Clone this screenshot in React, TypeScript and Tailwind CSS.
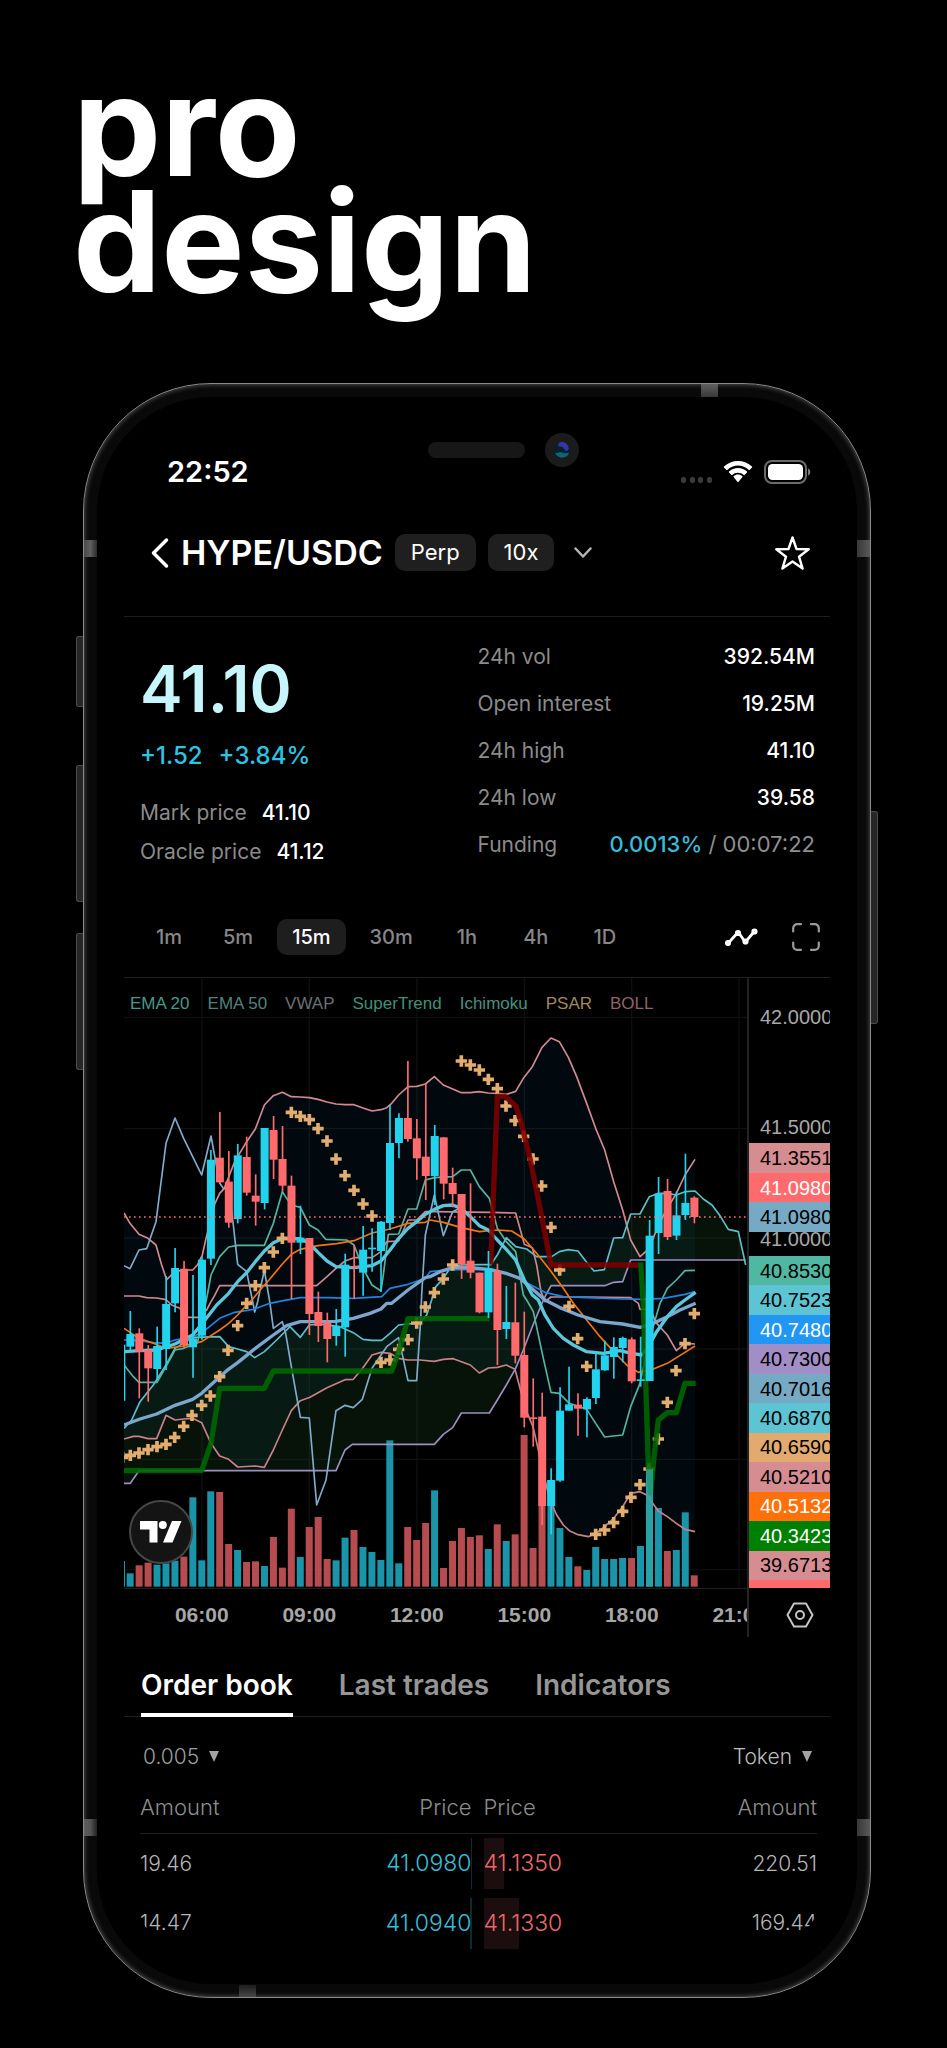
import React from "react";

type Quad = "tl" | "tr" | "bl" | "br";
type Piece = [Quad, string];

// the traces are stored per quadrant of the pane, each with its own origin
const origin: Record<Quad, [number, number]> = {
  tl: [-12, -9],
  tr: [918, -9],
  bl: [-12, 966],
  br: [918, 966],
};

function toPoints(pieces: Piece[]): [number, number][] {
  return pieces.flatMap(([quad, text]) =>
    text.split(" ").map((pair) => {
      const [x, y] = pair.split(",").map(Number);
      return [x + origin[quad][0], y + origin[quad][1]] as [number, number];
    })
  );
}

const toLine = (pieces: Piece[]) =>
  toPoints(pieces)
    .map((p) => p.join(","))
    .join(" ");

const bollUpper: Piece[] = [
  ["tl", "12,714 30,745 57,778 84,790 108,810 125,870 140,914 165,890 191,885 218,885 232,870 247,840 258,790 273,730 285,685 299,655 313,640 340,570 353,545 380,500 406,462 433,390 460,362 487,352 514,365 541,366 568,368 594,373 621,381 648,387 675,389 702,389 729,399 756,408 783,404 800,398 815,385 836,360 864,335 890,334 916,327 943,305"],
  ["tr", "40,330 68,342 94,353 121,353 148,350 175,354 202,355 229,358 257,349 280,310 307,275 336,217 363,189 388,200 415,247 440,305 470,385 497,460 524,525 551,620 578,705 602,795 630,845 658,820 685,750 712,700 739,655 765,600 795,553"],
];

const bollLower: Piece[] = [
  ["bl", "12,417 40,409 57,409 84,416 110,416 138,346 165,360 191,357 218,355 245,368 273,430 299,468 326,478 353,501 406,498 433,502 460,450 487,390 514,332 541,302 570,292 621,263 675,239 700,238 729,203 756,165 783,157 810,160 836,175 864,180 900,180 943,184"],
  ["br", "40,178 70,176 94,185 121,195 148,219 175,204 202,202 229,195 255,208 270,265 290,335 309,380 325,450 340,520 360,600 380,645 400,675 418,692 444,704 475,710 497,700 524,680 551,655 578,620 602,580 630,575 650,585 685,633 712,650 739,670 765,688 795,695"],
];

const kijun: Piece[] = [
  ["tl", "12,963 57,963 80,968 110,969 138,974 155,990"],
  ["bl", "180,25 191,45 205,52 235,52 260,30 273,5"],
  ["tl", "282,965 299,932 460,932 590,932 621,905 648,880 675,858 702,848 756,848 783,830 800,800 836,798 864,735 890,735 916,710 943,710"],
  ["tr", "182,712 257,714 283,808 307,818 320,870 333,950 345,980 363,966 470,966 602,968 625,985"],
  ["br", "630,28 660,28 680,70 712,105 739,152 765,130 795,132"],
];

const tenkan: Piece[] = [
  ["bl", "12,195 40,230 57,247 111,247 138,200 165,150 191,145 232,130 255,20"],
  ["tl", "262,960 273,900 299,845 326,816 353,811 433,811 460,745 487,650 500,670 514,690 541,697 568,750 594,765 617,793 680,795 702,810 729,880 756,930 783,948 790,900 805,778 836,777 864,702 890,702 916,615 943,608"],
  ["tr", "68,605 94,585 121,585 148,635 178,670 202,760 229,800 257,830 280,960"],
  ["br", "290,0 310,35 340,175 363,277 388,280 418,310 470,328 497,370 524,411 578,405 602,320 630,250 658,120 690,10"],
  ["tr", "712,940 739,915 765,887 795,886"],
];

const leadA: Piece[] = [
  ["bl", "12,385 35,360 60,305 100,255 138,195 165,145 218,112 299,110 326,140 353,147 380,155 404,173 433,155 470,120 510,80 541,112 568,75 600,72 660,80 700,98 729,118 756,121 785,121 810,100 836,75 864,72 900,68 920,45 935,0"],
  ["tr", "13,940 40,910 60,880 90,870 148,869 182,869 202,840 229,788 257,815 290,822 320,845 365,845 388,830 415,824 444,828 470,862 492,888 523,884 551,789 578,788 602,717 630,717 658,665 685,655 712,655 739,660 765,650 795,648 820,672 846,690 870,722 895,763 925,770 947,870"],
];

const leadB: Piece[] = [
  ["bl", "12,550 31,550 57,512 648,512 675,450 697,433 943,433"],
  ["br", "13,433 40,403 68,383 94,339 178,339 202,300 229,255 257,205 280,150 309,75 336,10"],
  ["tr", "345,965 363,932 524,932 551,922 578,920 602,855 947,855"],
];

const chikou: Piece[] = [
  ["tl", "12,872 30,881 57,825 80,821 108,740 138,505 165,429 191,490 218,545 245,600 273,483 299,625 310,640 326,640 340,750 353,868 380,890 400,990"],
  ["bl", "404,36 413,5"],
  ["tl", "433,885 450,985"],
  ["bl", "460,85 487,65 497,100 514,200 541,352 568,354 590,615 618,540 648,332 675,316 700,323 727,298 756,205 800,140 836,113 864,242 890,242 902,60"],
  ["tl", "905,960 916,780 943,660"],
  ["tr", "13,660 40,782 68,710 94,697"],
];

const ema20: Piece[] = [
  ["bl", "12,155 60,152 110,150 165,132 218,105 255,60 290,15"],
  ["tl", "326,955 353,920 380,893 406,860 433,828 460,803 487,791 541,791 568,805 594,832 621,858 648,875 700,878 756,872 783,858 810,825 836,790 864,760 890,740 916,718 943,703"],
  ["tr", "40,692 68,690 94,700 121,725 148,752 175,765 202,795 229,823 257,855 283,915 307,960"],
  ["br", "325,0 345,45 370,85 400,115 430,135 470,155 520,160 570,152 605,160 635,165 655,140 680,95 712,50 739,20 765,0"],
  ["tr", "797,952"],
];

const ema50: Piece[] = [
  ["bl", "12,375 60,357 110,342 165,316 218,298 245,280 273,254 320,212 353,188 406,145 460,105 500,77 541,65 594,65 648,64 700,55 750,40 783,27 800,10"],
  ["tl", "815,985 864,945 916,908"],
  ["tr", "0,905 30,890 68,878 121,878 182,884 229,895 270,910 307,942 345,975"],
  ["br", "388,22 444,45 510,65 578,72 630,82 665,72 712,50 750,30 797,10"],
];

const vwap: Piece[] = [
  ["bl", "12,120 60,122 100,128 138,130 165,120 218,110 250,95 299,55 340,38 400,28 450,10 490,2"],
  ["tl", "541,968 621,968 702,970 785,965 810,940 864,928 916,910"],
  ["tr", "0,890 68,884 121,884 182,884 257,905 307,932 345,952 400,965 470,968 578,972 640,973 700,970 765,958 795,950"],
];

const signal: Piece[] = [
  ["bl", "12,85 57,115 100,130 138,145 191,138 245,125 299,90 326,70 353,45 380,15"],
  ["tl", "400,970 420,945 447,915 487,867 514,838 541,823 594,812 650,806 702,797 756,774 810,762 864,745 916,742"],
  ["tr", "0,735 40,742 94,758 148,770 202,765 245,768 283,792 320,835 360,885 400,940 430,985"],
  ["br", "470,60 510,110 551,155 590,195 625,217 670,207 712,190 760,160 795,138"],
];

const trendUp: Piece[] = [
  ["bl", "12,512 245,512 273,430 299,265 433,265 460,213 815,213 836,155 864,56 930,56"],
  ["br", "0,56 178,56"],
];
const trendDown: Piece[] = [["tr", "182,869 202,364 225,364 257,392 270,430 300,550 336,730 363,870 625,870"]];
const trendUpLast: Piece[] = [
  ["tr", "632,862 640,990"],
  ["br", "655,500 662,580 672,470 685,360 712,338 739,338 765,250 797,250"],
];

const psar: Piece[] = [
  ["tl", "514,412 541,424 568,434 594,461 621,498 648,552 675,602 702,646 729,687 756,723 487,790 460,831 433,878 406,932 380,985"],
  ["bl", "353,77 324,151 299,230 271,288 245,316 216,346 191,379 164,412 138,433 111,440 84,449 57,459 31,466 8,472 783,187 810,180 836,148 864,119 890,69 916,21"],
  ["tr", "13,953 40,912 68,870 94,258 121,270 148,285 175,313 202,341 228,393 255,437 281,484 309,552 335,633 363,757 389,885"],
  ["br", "417,19 443,116 470,199 497,703 524,690 551,668 578,634 603,592 630,554 657,507 685,417 712,307 738,212 765,131 793,41"],
];

// [up, high, body top, body bottom, low, volume]
const candles: [number, number, number, number, number, number][] = [
  [1, 999, 1068, 1106, 1121, 40],
  [0, 1051, 1066, 1121, 1261, 64],
  [0, 1101, 1116, 1171, 1271, 72],
  [1, 1046, 1104, 1173, 1206, 66],
  [1, 894, 978, 1113, 1176, 70],
  [1, 810, 870, 976, 1003, 78],
  [0, 849, 872, 1101, 1111, 90],
  [1, 891, 1081, 1108, 1199, 268],
  [1, 834, 845, 1073, 1085, 79],
  [1, 516, 545, 842, 861, 286],
  [0, 402, 539, 613, 618, 284],
  [0, 519, 611, 734, 749, 128],
  [1, 498, 532, 723, 736, 110],
  [0, 476, 537, 644, 653, 74],
  [0, 589, 653, 671, 743, 76],
  [1, 450, 450, 675, 694, 62],
  [0, 414, 456, 545, 603, 149],
  [0, 444, 543, 623, 641, 57],
  [0, 593, 623, 794, 963, 234],
  [1, 683, 779, 794, 828, 89],
  [0, 780, 780, 1008, 1071, 179],
  [0, 941, 1002, 1044, 1092, 209],
  [0, 1004, 1034, 1083, 1153, 83],
  [1, 993, 1044, 1074, 1103, 79],
  [1, 827, 860, 1048, 1136, 147],
  [0, 801, 864, 869, 963, 170],
  [1, 744, 815, 884, 953, 119],
  [1, 751, 809, 814, 881, 104],
  [1, 729, 731, 819, 941, 80],
  [1, 381, 495, 735, 756, 439],
  [1, 406, 420, 495, 541, 70],
  [0, 249, 420, 483, 491, 179],
  [0, 423, 481, 541, 605, 140],
  [0, 316, 536, 594, 666, 191],
  [1, 441, 474, 594, 681, 289],
  [0, 478, 478, 617, 664, 56],
  [0, 569, 615, 648, 688, 137],
  [0, 648, 648, 859, 903, 176],
  [0, 616, 848, 884, 901, 149],
  [0, 884, 884, 1003, 1006, 154],
  [1, 819, 871, 1003, 1020, 113],
  [0, 857, 880, 1056, 1161, 187],
  [1, 924, 1032, 1053, 1083, 137],
  [0, 914, 1033, 1133, 1156, 157],
  [0, 1001, 1131, 1319, 1348, 455],
  [0, 1201, 1318, 1323, 1406, 116],
  [0, 1244, 1316, 1584, 1641, 242],
  [1, 1471, 1506, 1584, 1669, 242],
  [1, 1228, 1298, 1508, 1511, 176],
  [1, 1166, 1279, 1298, 1298, 89],
  [0, 1246, 1280, 1292, 1373, 61],
  [1, 1258, 1263, 1294, 1378, 50],
  [1, 1119, 1174, 1260, 1278, 119],
  [1, 1088, 1132, 1177, 1178, 83],
  [1, 1078, 1107, 1137, 1202, 83],
  [1, 1076, 1080, 1110, 1153, 86],
  [0, 1078, 1084, 1210, 1216, 86],
  [1, 1076, 1204, 1209, 1226, 122],
  [1, 726, 773, 1209, 1209, 352],
  [1, 597, 647, 765, 828, 236],
  [0, 603, 639, 777, 786, 107],
  [1, 641, 712, 773, 786, 110],
  [1, 527, 675, 711, 726, 223],
  [0, 655, 659, 717, 736, 34],
];

const PriceChart = () => {
  const boll = `${toLine(bollUpper)} ${toLine(bollLower).split(" ").reverse().join(" ")}`;
  const cloud = `${toLine(leadA)} ${toLine(leadB).split(" ").reverse().join(" ")}`;

  return (
    <svg
      viewBox="0 0 1869 1830"
      preserveAspectRatio="none"
      className="block h-full w-full"
      fill="none"
      role="img"
      aria-label="HYPE/USDC 15 minute chart"
    >
      <g stroke="#0e0f10" strokeWidth="4">
        {[234, 556, 879, 1201, 1523, 1845].map((x) => (
          <path key={x} d={`M${x} 0V1830`} />
        ))}
        {[118, 452, 780, 1113, 1444, 1775].map((y) => (
          <path key={y} d={`M0 ${y}H1869`} />
        ))}
      </g>
      <polygon points={boll} fill="#2196f3" fillOpacity="0.06" />
      <polygon points={cloud} fill="#43a047" fillOpacity="0.11" />

      {candles.map((c, i) => (
        <rect
          key={i}
          x={8 + 26.86 * i}
          y={1826 - c[5]}
          width="21"
          height={c[5]}
          fill={c[0] ? "#1a94a8" : "#b64c50"}
        />
      ))}
      <rect x="0" y="1749" width="3" height="77" fill="#1a94a8" />

      <g strokeWidth="5" strokeLinejoin="round">
        <polyline points={toLine(bollUpper)} stroke="#d28a91" />
        <polyline points={toLine(bollLower)} stroke="#c98189" />
        <polyline points={toLine(leadB)} stroke="#9a8fc0" />
        <polyline points={toLine(leadA)} stroke="#5cc0cc" />
        <polyline points={toLine(tenkan)} stroke="#53b59f" />
        <polyline points={toLine(kijun)} stroke="#cf878f" />
        <polyline points={toLine(chikou)} stroke="#7faccb" />
        <polyline points={toLine(vwap)} stroke="#2184e0" />
        <polyline points={toLine(signal)} stroke="#f5740f" />
        <polyline points={toLine(ema50)} stroke="#7ba7cf" strokeWidth="10" />
        <polyline points={toLine(ema20)} stroke="#5cc6da" strokeWidth="10" />
      </g>

      <g stroke="#e3ad70" strokeWidth="11">
        {toPoints(psar).map(([x, y]) => (
          <path key={`${x}-${y}`} d={`M${x - 17} ${y}h34M${x} ${y - 17}v34`} />
        ))}
      </g>
      <g strokeWidth="16" strokeLinejoin="round">
        <polyline points={toLine(trendUp)} stroke="#006800" strokeOpacity="0.88" />
        <polyline points={toLine(trendDown)} stroke="#7c0000" strokeOpacity="0.88" />
        <polyline points={toLine(trendUpLast)} stroke="#006800" strokeOpacity="0.88" />
      </g>

      <path d="M2 1100V1268" stroke="#26d5ec" strokeWidth="4" />
      {candles.map(([up, high, top, bottom, low], i) => {
        const x = 19 + 26.86 * i;
        const color = up ? "#22d3ee" : "#ff6b6d";
        return (
          <g key={i}>
            <path d={`M${x} ${high}V${low}`} stroke={color} strokeWidth="5" />
            <rect x={x - 12} y={top} width="24" height={bottom - top} fill={color} />
          </g>
        );
      })}
      {/* this volume bar stays readable under the trend line */}
      <rect x="1566" y="1474" width="21" height="352" fill="#2fa5a6" fillOpacity="0.75" />
      <path d="M0 717H1869" stroke="#ff6b6d" strokeWidth="5" strokeDasharray="5 10" />
    </svg>
  );
};

const chartLegend = [
  { label: "EMA 20", color: "text-[#45998a]" },
  { label: "EMA 50", color: "text-[#53807c]" },
  { label: "VWAP", color: "text-[#6b7075]" },
  { label: "SuperTrend", color: "text-[#3f8f7c]" },
  { label: "Ichimoku", color: "text-[#479180]" },
  { label: "PSAR", color: "text-[#a2865c]" },
  { label: "BOLL", color: "text-[#8f6367]" },
];

const axisTop = [
  { value: "41.3551", style: "bg-[#d68d92] text-black" },
  { value: "41.0980", style: "bg-[#ff6b6d] text-white" },
  { value: "41.0980", style: "bg-[#76a9c4] text-black" },
];

const axisBottom = [
  { value: "40.8530", style: "bg-[#50b8a2] text-black" },
  { value: "40.7523", style: "bg-[#5cc4d3] text-black" },
  { value: "40.7480", style: "bg-[#2196f3] text-white" },
  { value: "40.7300", style: "bg-[#a28ec6] text-black" },
  { value: "40.7016", style: "bg-[#76a9c4] text-black" },
  { value: "40.6870", style: "bg-[#5cc4d3] text-black" },
  { value: "40.6590", style: "bg-[#e2aa6e] text-black" },
  { value: "40.5210", style: "bg-[#d68d92] text-black" },
  { value: "40.5132", style: "bg-[#ff6f0a] text-white" },
  { value: "40.3423", style: "bg-[#008000] text-white" },
  { value: "39.6713", style: "bg-[#d68d92] text-black" },
];

const stats = [
  { label: "24h vol", value: "392.54M" },
  { label: "Open interest", value: "19.25M" },
  { label: "24h high", value: "41.10" },
  { label: "24h low", value: "39.58" },
];

const intervals = ["1m", "5m", "15m", "30m", "1h", "4h", "1D"];
const times = ["06:00", "09:00", "12:00", "15:00", "18:00", "21:00"];

const orders = [
  { bid: "41.0980", bidAmount: "19.46", bidDepth: 1, ask: "41.1350", askAmount: "220.51", askDepth: 20 },
  { bid: "41.0940", bidAmount: "14.47", bidDepth: 2, ask: "41.1330", askAmount: "169.44", askDepth: 35 },
];

const StatusBar = () => (
  <div className="flex h-9 items-center justify-between pl-[43px] pr-[18px]">
    <span className="text-[29px] font-semibold text-white">22:52</span>
    <div className="flex items-center">
      <svg width="32" height="6" viewBox="0 0 32 6" fill="#3a3a3a" className="mr-[10px] mt-4">
        <rect x="0" width="5" height="6" rx="2" />
        <rect x="9" width="5" height="6" rx="2" />
        <rect x="17" width="5" height="6" rx="2" />
        <rect x="26" width="5" height="6" rx="2" />
      </svg>
      <svg width="30" height="22" viewBox="0 0 30 22" fill="#fff" className="mr-[11px]">
        <path d="M15 4.6c4.1 0 7.900 1.600 10.700 4.300.2.2.6.2.8 0l2.500-2.500c.3-.3.3-.7 0-.9C25.300 2 20.400 0 15 0S4.700 2 1 5.500c-.3.2-.3.6 0 .9l2.500 2.500c.2.2.6.2.8 0C7.100 6.200 10.900 4.600 15 4.600z" />
        <path d="M15 11.800c2.200 0 4.200.8 5.700 2.200.2.2.6.2.8 0l2.500-2.500c.3-.3.3-.7 0-.9-2.400-2.200-5.500-3.500-9-3.500s-6.600 1.300-9 3.500c-.3.2-.3.6 0 .9L8.500 14c.2.200.6.200.8 0 1.500-1.400 3.500-2.200 5.700-2.200z" />
        <path d="M19.400 16.100c.3-.3.300-.700 0-.9-1.200-1-2.700-1.600-4.400-1.600s-3.200.6-4.400 1.600c-.3.2-.3.6 0 .9l4 5c.2.200.6.200.8 0z" />
      </svg>
      <svg width="48" height="24" viewBox="0 0 48 24" fill="none">
        <rect x="1" y="1" width="41" height="22" rx="7" stroke="#6b6b6b" strokeWidth="2" />
        <rect x="4" y="4" width="35" height="16" rx="4.500" fill="#fff" />
        <path d="M44 8.500c3 .8 3 6.200 0 7z" fill="#7a7a7a" />
      </svg>
    </div>
  </div>
);

const MarketHeader = () => (
  <header className="mt-11 flex items-center border-b border-[#1d1d1d] pb-[45px] pl-[27px] pr-5">
    <button aria-label="Back">
      <svg width="18" height="32" viewBox="0 0 18 32" fill="none" stroke="#fff" strokeWidth="3.500" strokeLinecap="round" strokeLinejoin="round">
        <path d="M15.500 3 2.500 16l13 13" />
      </svg>
    </button>
    <h2 className="ml-3 text-[34px] font-semibold leading-9 text-white">HYPE/USDC</h2>
    <button className="ml-3 h-[37px] rounded-[10px] bg-[#1f1f1f] px-4 text-[22px] text-white">Perp</button>
    <button className="ml-3 h-[37px] rounded-[10px] bg-[#1f1f1f] px-4 text-[22px] text-white">10x</button>
    <button aria-label="More markets" className="ml-5">
      <svg width="18" height="12" viewBox="0 0 18 12" fill="none" stroke="#b5b5b5" strokeWidth="2.500" strokeLinecap="round" strokeLinejoin="round">
        <path d="M1.500 1.500 9 9.500l7.500-8" />
      </svg>
    </button>
    <button aria-label="Add to favourites" className="ml-auto">
      <svg width="35" height="34" viewBox="0 0 35 34" fill="none" stroke="#fff" strokeWidth="2.400" strokeLinejoin="round">
        <path d="M17.500 1.500l4 11.500 12.200.3-9.700 7.400 3.600 11.800-10.100-7-10.100 7L11 20.700 1.300 13.300l12.200-.3z" />
      </svg>
    </button>
  </header>
);

const MarketStats = () => (
  <section className="flex pl-4 pr-[15px]">
    <div className="w-1/2 pt-[42px]">
      <p className="text-[64px] font-semibold leading-[60px] text-[#c7f5fc]">41.10</p>
      <p className="mt-[21px] flex gap-4 text-[24px] font-medium leading-8 text-[#2cc4e0]">
        <span>+1.52</span>
        <span>+3.84%</span>
      </p>
      <dl className="mt-[21px] text-[21px] leading-[39px]">
        <div className="flex gap-[15px]">
          <dt className="text-[#8b8b8b]">Mark price</dt>
          <dd className="font-medium text-white">41.10</dd>
        </div>
        <div className="flex gap-[15px]">
          <dt className="text-[#8b8b8b]">Oracle price</dt>
          <dd className="font-medium text-white">41.12</dd>
        </div>
      </dl>
    </div>
    <dl className="w-1/2 pt-4 text-[21px] leading-[47px]">
      {stats.map((item) => (
        <div key={item.label} className="flex justify-between">
          <dt className="text-[#8b8b8b]">{item.label}</dt>
          <dd className="font-medium text-white">{item.value}</dd>
        </div>
      ))}
      <div className="flex justify-between">
        <dt className="text-[#8b8b8b]">Funding</dt>
        <dd className="text-[22px] text-[#8f8f8f]">
          <span className="font-medium text-[#35bdd8]">0.0013%</span> / 00:07:22
        </dd>
      </div>
    </dl>
  </section>
);

const IntervalBar = () => (
  <div className="mt-12 flex items-center border-b border-[#1f1f1f] pb-[22px] pl-[15px] pr-2.5">
    <div className="flex gap-[9px]">
      {intervals.map((item) => (
        <button
          key={item}
          className={
            item === "15m"
              ? "h-9 rounded-[10px] bg-[#1e1e1e] px-[15px] text-[20px] font-medium text-white"
              : "h-9 min-w-[60px] px-[15px] text-[20px] font-medium text-[#878787]"
          }
        >
          {item}
        </button>
      ))}
    </div>
    <button aria-label="Indicators" className="ml-auto">
      <svg width="33" height="18" viewBox="0 0 33 18" fill="none" stroke="#fff" strokeWidth="2.800">
        <path d="M4.500 13.700 11.500 6M14.600 6l4.300 6.200M22.200 11.900 28 5" />
        <circle cx="3" cy="15" r="1.700" />
        <circle cx="13" cy="5" r="1.700" />
        <circle cx="20.500" cy="13.500" r="1.700" />
        <circle cx="29.500" cy="3.500" r="1.700" />
      </svg>
    </button>
    <button aria-label="Full screen" className="ml-[34px]">
      <svg width="28" height="28" viewBox="0 0 28 28" fill="none" stroke="#9a9a9a" strokeWidth="2.200" strokeLinecap="round">
        <path d="M9 1.200H5.200a4 4 0 0 0-4 4V8.500M19 1.200h3.800a4 4 0 0 1 4 4V8.500M9 26.800H5.200a4 4 0 0 1-4-4V19.500M19 26.800h3.800a4 4 0 0 0 4-4V19.500" />
      </svg>
    </button>
  </div>
);

const ChartPanel = () => (
  <section className="grid grid-cols-[1fr_83px] font-['Liberation_Sans',sans-serif]">
    <div className="relative h-[610px] min-w-0">
      <PriceChart />
      <ul className="absolute left-1.5 top-3.5 flex gap-[18px] text-[17px] leading-6">
        {chartLegend.map((item) => (
          <li key={item.label} className={item.color}>
            {item.label}
          </li>
        ))}
      </ul>
      <a
        href="#"
        aria-label="TradingView"
        className="absolute bottom-6 left-[5px] flex size-16 items-center justify-center rounded-full border-2 border-[#464646] bg-[#141414]"
      >
        <svg width="42" height="22" viewBox="0 0 42 22" fill="#fff">
          <path d="M0 0h17.500v21.500h-8v-13H0zM32 0h9.500L32.500 21.500H23z" />
          <circle cx="22.800" cy="4" r="4" />
        </svg>
      </a>
    </div>
    <div className="flex h-[610px] flex-col overflow-hidden border-l-2 border-[#232323] text-[20px] text-[#a8a8a8]">
      <span className="mt-[23px] pl-[11px] leading-8">42.0000</span>
      <span className="mt-[78px] pl-[11px] leading-8">41.5000</span>
      <div className="flex h-[89px] shrink-0 flex-col leading-5">
        {axisTop.map((item, i) => (
          <span key={i} className={`flex flex-1 items-center pl-[11px] ${item.style}`}>
            {item.value}
          </span>
        ))}
      </div>
      <span className="h-6 shrink-0 overflow-hidden pl-[11px] leading-[14px]">41.0000</span>
      <div className="flex h-[324px] shrink-0 flex-col leading-5">
        {axisBottom.map((item) => (
          <span key={item.value} className={`flex flex-1 items-center pl-[11px] ${item.style}`}>
            {item.value}
          </span>
        ))}
      </div>
      <span className="flex-1 bg-[#ff6b6d]" />
    </div>
    <div className="h-[49px] overflow-hidden border-t border-[#1f1f1f]">
      <ol className="ml-6 grid w-[645px] grid-cols-6 pt-2.5 text-center text-[21px] font-bold leading-8 text-[#a6a6a6]">
        {times.map((time) => (
          <li key={time}>{time}</li>
        ))}
      </ol>
    </div>
    <div className="flex items-center justify-center border-l-2 border-[#232323] pl-6 pr-1 pt-1">
      <button aria-label="Chart settings">
        <svg width="28" height="26" viewBox="0 0 28 26" fill="none" stroke="#c4c4c4" strokeWidth="2">
          <path d="M8 1.500h12L26.500 13 20 24.500H8L1.500 13z" strokeLinejoin="round" />
          <circle cx="14" cy="13" r="4" />
        </svg>
      </button>
    </div>
  </section>
);

const BookTabs = () => (
  <nav className="mt-8 flex gap-[46px] border-b border-[#1f1f1f] pl-[17px] text-[28px] font-semibold leading-8">
    <button className="-mb-px border-b-4 border-white pb-3 text-white">Order book</button>
    <button className="-mb-px border-b-4 border-transparent pb-3 text-[#969696]">Last trades</button>
    <button className="-mb-px border-b-4 border-transparent pb-3 text-[#969696]">Indicators</button>
  </nav>
);

const Triangle = () => (
  <svg width="10" height="11" viewBox="0 0 10 11" fill="#a3a3a3" className="mb-0.5">
    <path d="M0 0h10L5 11z" />
  </svg>
);

const OrderBook = () => (
  <section className="font-light">
    <div className="mt-7 flex h-6 justify-between pl-[19px] pr-[18px] text-[21px] leading-6">
      <label className="flex items-center gap-2.5">
        <select aria-label="Price step" className="appearance-none bg-transparent text-[#9d9d9d] [field-sizing:content]">
          <option>0.005</option>
        </select>
        <Triangle />
      </label>
      <label className="flex items-center gap-2.5">
        <select aria-label="Amount unit" className="appearance-none bg-transparent text-[#bdbdbd] [field-sizing:content]">
          <option>Token</option>
        </select>
        <Triangle />
      </label>
    </div>
    <div className="ml-4 mr-[13px] mt-3.5">
      <table className="w-full table-fixed border-collapse">
        <thead>
          <tr className="h-[50px] border-b border-[#1f1f1f] text-[22px] text-[#8d8d8d]">
            <th className="text-left font-light">Amount</th>
            <th className="pr-[7px] text-right font-light">Price</th>
            <th className="pl-[5px] text-left font-light">Price</th>
            <th className="text-right font-light">Amount</th>
          </tr>
        </thead>
        <tbody>
          {orders.map((row) => (
            <tr key={row.bid} className="h-[60px]">
              <td className="text-[21px] text-[#b4b4b4]">{row.bidAmount}</td>
              <td className="pr-[7px] text-right text-[23px] text-[#35bdd8]">
                <div className="relative h-[51px] leading-[51px]">
                  <span className="absolute inset-y-0 right-0 bg-[#0a2c33]" style={{ width: row.bidDepth }} />
                  <span className="relative">{row.bid}</span>
                </div>
              </td>
              <td className="pl-[5px] text-[23px] text-[#ec676b]">
                <div className="relative h-[51px] leading-[51px]">
                  <span className="absolute inset-y-0 left-0 bg-[#1c0d0e]" style={{ width: row.askDepth }} />
                  <span className="relative">{row.ask}</span>
                </div>
              </td>
              <td className="text-right text-[21px] text-[#b4b4b4]">{row.askAmount}</td>
            </tr>
          ))}
        </tbody>
      </table>
    </div>
  </section>
);

const PhoneHardware = () => (
  <>
    <span className="absolute -left-[8px] top-[252px] h-[71px] w-[7px] rounded-l-[3px] border border-r-0 border-[#4a4a4a] bg-[#262626]" />
    <span className="absolute -left-[8px] top-[381px] h-[137px] w-[7px] rounded-l-[3px] border border-r-0 border-[#4a4a4a] bg-[#262626]" />
    <span className="absolute -left-[8px] top-[549px] h-[137px] w-[7px] rounded-l-[3px] border border-r-0 border-[#4a4a4a] bg-[#262626]" />
    <span className="absolute -right-[8px] top-[427px] h-[213px] w-[7px] rounded-r-[3px] border border-l-0 border-[#4a4a4a] bg-[#262626]" />
    <span className="absolute right-[152px] top-0 h-[13px] w-[17px] bg-linear-to-b from-[#606060] to-[#383838]" />
    <span className="absolute bottom-0 left-[155px] h-3 w-[17px] bg-linear-to-t from-[#484848] to-[#1c1c1c]" />
    <span className="absolute left-0 top-[156px] h-[17px] w-[13px] bg-linear-to-r from-[#4a4a4a] via-[#5e5e5e] to-[#2c2c2c]" />
    <span className="absolute right-0 top-[156px] h-[17px] w-[13px] bg-linear-to-l from-[#5a5a5a] via-[#484848] to-[#383838]" />
    <span className="absolute bottom-[161px] left-0 h-[17px] w-[13px] bg-linear-to-r from-[#5e5e5e] via-[#545454] to-[#222222]" />
    <span className="absolute bottom-[161px] right-0 h-[17px] w-[13px] bg-linear-to-l from-[#5a5a5a] via-[#484848] to-[#383838]" />
    <span className="absolute left-[344px] top-[58px] h-4 w-[97px] rounded-full bg-[#171717]" />
    <span className="absolute left-[461px] top-[49px] flex size-[34px] items-center justify-center rounded-full bg-[#1b1b1c]">
      <svg width="18" height="18" viewBox="0 0 18 18">
        <circle cx="9" cy="9" r="8" fill="#08202c" />
        <path d="M5.500 2.500C9-.5 15 1.500 15.800 7.500c-.8 2.500-2.300 3-3.800 1.500L9.500 6 5 5z" fill="#3336a6" />
        <path d="M1.800 11.500c3 1.500 4.500-1 7 0s4 .8 7.300.2c-1.800 6.600-12.300 6.600-14.300-.2z" fill="#0f6577" />
      </svg>
    </span>
  </>
);

export default function App() {
  return (
    <main className="min-h-screen bg-black pb-[49px] pt-[67px] font-[Inter,sans-serif]">
      <h1 className="pl-[73px] text-[140px] font-bold leading-[116px] text-white">
        pro
        <br />
        design
      </h1>
      <div className="relative ml-[83px] mr-[76px] mt-[84px] rounded-[128px] border border-[#8a8a8a] px-10 pb-8 pt-[70px] shadow-[inset_0_0_4px_1px_#4a4a4a,inset_0_0_0_13px_#090909]">
        <PhoneHardware />
        <div className="overflow-hidden rounded-b-[100px] pb-3">
          <StatusBar />
          <MarketHeader />
          <MarketStats />
          <IntervalBar />
          <ChartPanel />
          <BookTabs />
          <OrderBook />
        </div>
      </div>
    </main>
  );
}
